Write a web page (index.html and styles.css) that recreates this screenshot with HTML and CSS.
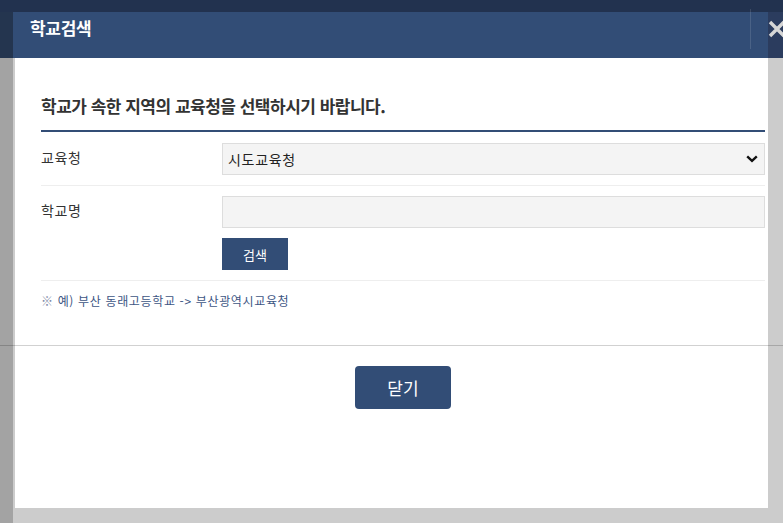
FILE: index.html
```html
<!DOCTYPE html>
<html lang="ko">
<head>
<meta charset="utf-8">
<title>학교검색</title>
<link rel="stylesheet" href="styles.css">
</head>
<body>
<div class="topbar"></div>
<div class="stage">
  <div class="left-strip"><div class="left-top"></div></div>
  <div class="modal">
    <div class="modal-head"><h1 class="head-title">학교검색</h1></div>
    <div class="modal-body">
      <h2 class="title">학교가 속한 지역의 교육청을 선택하시기 바랍니다.</h2>
      <div class="row row-first">
        <div class="label">교육청</div>
        <div class="field">
          <div class="select"><span>시도교육청</span>
            <svg class="chev" width="12" height="8" viewBox="0 0 12 8"><path d="M1.2 1.4 L6 5.8 L10.8 1.4" fill="none" stroke="#111" stroke-width="2.4"/></svg>
          </div>
        </div>
      </div>
      <div class="row">
        <div class="label">학교명</div>
        <div class="field">
          <div class="input"></div>
          <button class="btn-search">검색</button>
        </div>
      </div>
      <p class="note"><span class="mark">※</span> 예) 부산 동래고등학교 -&gt; 부산광역시교육청</p>
      <div class="foot"><button class="btn-close">닫기</button></div>
    </div>
  </div>
  <div class="right-strip">
    <div class="close-x">
      <svg width="18" height="18" viewBox="0 0 18 18"><path d="M2 2 L16 16 M16 2 L2 16" stroke="#d6d6d6" stroke-width="3.4" fill="none"/></svg>
    </div>
  </div>
</div>
<div class="hline"></div>
<div class="vline"></div>
</body>
</html>
```
FILE: styles.css
```css
html, body {
  margin: 0;
  padding: 0;
}
body {
  width: 783px;
  height: 523px;
  overflow: hidden;
  position: relative;
  background: #cccccc;
  font-family: "Noto Sans CJK KR", "Noto Sans", sans-serif;
  color: #333;
}
.topbar {
  height: 12px;
  background: #22324f;
}
.stage {
  display: flex;
  height: 511px;
}
.left-strip {
  width: 13px;
  flex: none;
  background: #a3a3a3;
}
.left-top {
  height: 46px;
  background: #24354f;
}
.modal {
  width: 755px;
  flex: none;
  display: flex;
  flex-direction: column;
}
.modal-head {
  height: 46px;
  background: #324d76;
  box-sizing: border-box;
  padding: 3px 0 0 17px;
}
.head-title {
  margin: 0;
  font-size: 17px;
  line-height: 26px;
  font-weight: 700;
  color: #fff;
  letter-spacing: -0.3px;
}
.modal-body {
  margin-left: 2px;
  height: 450px;
  background: #fff;
  box-sizing: border-box;
  padding: 36px 3px 0 26px;
}
.title {
  margin: 0;
  font-size: 17px;
  line-height: 24px;
  font-weight: 700;
  color: #333;
  letter-spacing: -0.5px;
  padding-bottom: 12px;
  border-bottom: 2px solid #324d76;
}
.row {
  display: flex;
  padding: 10px 0;
  border-bottom: 1px solid #eee;
}
.row-first {
  padding-top: 11px;
}
.label {
  width: 181px;
  flex: none;
  font-size: 14px;
  line-height: 20px;
  padding-top: 4px;
  color: #333;
  letter-spacing: 0.6px;
}
.field {
  flex: 1;
  display: flex;
  flex-direction: column;
  align-items: flex-start;
}
.select, .input {
  width: 100%;
  height: 32px;
  box-sizing: border-box;
  border: 1px solid #dddddd;
  background: #f4f4f4;
}
.select {
  display: flex;
  align-items: center;
  justify-content: space-between;
  padding: 0 6px 0 5px;
  font-size: 14px;
  color: #222;
  letter-spacing: 0.7px;
}
.chev {
  display: block;
}
.btn-search {
  margin-top: 10px;
  width: 66px;
  height: 32px;
  border: none;
  background: #324d76;
  color: #fff;
  font-family: inherit;
  font-size: 13px;
  padding: 0;
}
.note {
  margin: 0;
  padding-top: 11px;
  font-size: 12px;
  line-height: 18px;
  color: #3d5684;
  letter-spacing: 0.65px;
}
.mark {
  color: #7f8aa6;
}
.foot {
  margin-top: 56px;
  display: flex;
  justify-content: center;
}
.btn-close {
  width: 96px;
  height: 43px;
  border: none;
  border-radius: 4px;
  background: #324d76;
  color: #fff;
  font-family: inherit;
  font-size: 17px;
  padding: 0;
}
.right-strip {
  width: 15px;
  flex: none;
  overflow: hidden;
}
.close-x {
  height: 46px;
  background: #2b3c5e;
  box-sizing: border-box;
  padding-top: 8px;
}
.close-x svg {
  display: block;
}
.hline {
  position: absolute;
  left: 0;
  right: 0;
  top: 345px;
  height: 1px;
  background: rgba(0, 0, 0, 0.18);
}
.vline {
  position: absolute;
  left: 750px;
  top: 9px;
  width: 1px;
  height: 40px;
  background: rgba(255, 255, 255, 0.12);
}
```
